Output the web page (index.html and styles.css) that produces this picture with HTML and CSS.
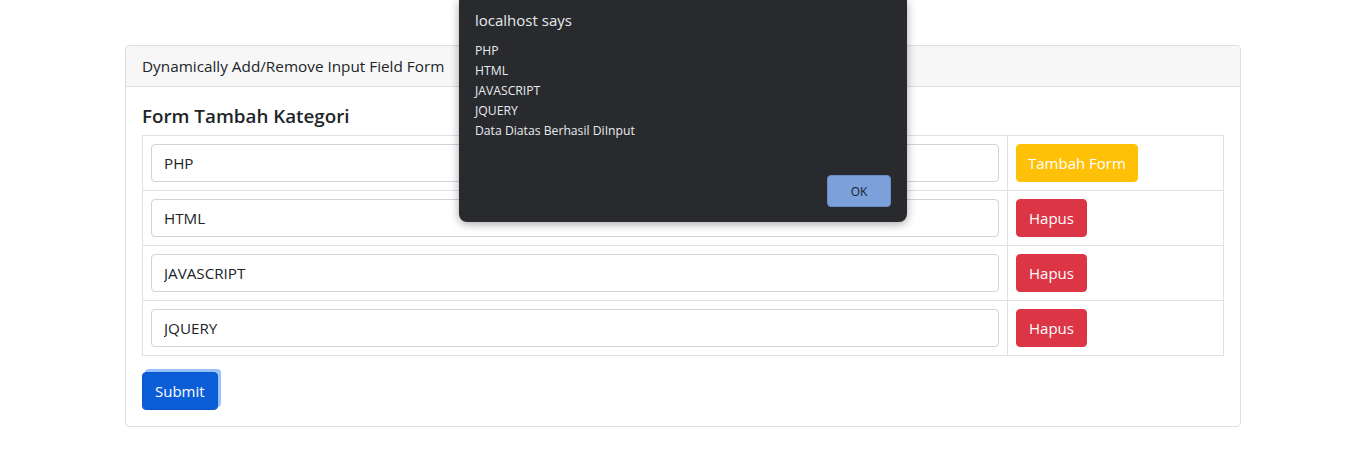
FILE: index.html
```html
<!DOCTYPE html>
<html lang="id">
<head>
<meta charset="utf-8">
<title>Dynamically Add/Remove Input Field Form</title>
<link rel="stylesheet" href="styles.css">
</head>
<body>
<div class="container">
  <div class="card">
    <div class="card-header">Dynamically Add/Remove Input Field Form</div>
    <div class="card-body">
      <h4 class="title">Form Tambah Kategori</h4>
      <table class="tbl">
        <tr>
          <td class="col-input"><input class="field" type="text" value="PHP"></td>
          <td class="col-action"><button class="btn btn-warning" type="button">Tambah Form</button></td>
        </tr>
        <tr>
          <td class="col-input"><input class="field" type="text" value="HTML"></td>
          <td class="col-action"><button class="btn btn-danger" type="button">Hapus</button></td>
        </tr>
        <tr>
          <td class="col-input"><input class="field" type="text" value="JAVASCRIPT"></td>
          <td class="col-action"><button class="btn btn-danger" type="button">Hapus</button></td>
        </tr>
        <tr>
          <td class="col-input"><input class="field" type="text" value="JQUERY"></td>
          <td class="col-action"><button class="btn btn-danger" type="button">Hapus</button></td>
        </tr>
      </table>
      <button class="btn btn-primary" type="button">Submit</button>
    </div>
  </div>
</div>

<div class="dialog">
  <div class="dialog-title">localhost says</div>
  <div class="dialog-msg">
    <div>PHP</div>
    <div>HTML</div>
    <div>JAVASCRIPT</div>
    <div>JQUERY</div>
    <div>Data Diatas Berhasil DiInput</div>
  </div>
  <div class="dialog-actions">
    <button class="dialog-ok" type="button">OK</button>
  </div>
</div>
</body>
</html>
```

FILE: styles.css
```css
* { box-sizing: border-box; }

html, body {
  margin: 0;
  padding: 0;
  background: #fff;
}

body {
  font-family: "Open Sans", "Noto Sans", "Liberation Sans", sans-serif;
  font-size: 16px;
  line-height: 24px;
  color: #212529;
}

.container {
  width: 1140px;
  margin: 45px auto 0;
  padding: 0 12px;
}

.card {
  border: 1px solid #dfdfdf;
  border-radius: 4px;
  background: #fff;
}

.card-header {
  padding: 8px 16px;
  background: #f7f7f7;
  border-bottom: 1px solid #dfdfdf;
  border-radius: 3px 3px 0 0;
  font-size: 15.3px;
  color: #212529;
}

.card-body {
  padding: 16px;
}

.title {
  margin: 0 0 6px;
  font-size: 18.8px;
  line-height: 26px;
  font-weight: 600;
  color: #212529;
}

.tbl {
  width: 100%;
  border-collapse: collapse;
  margin-bottom: 16px;
}

.tbl td {
  border: 1px solid #dee2e6;
  padding: 8px;
  vertical-align: top;
}

.col-action {
  width: 216px;
}

.field {
  display: block;
  width: 100%;
  height: 38px;
  padding: 6px 12px;
  font-family: inherit;
  font-size: 15.2px;
  color: #212529;
  background: #fff;
  border: 1px solid #ced4da;
  border-radius: 4px;
  outline: none;
}

.btn {
  display: inline-block;
  height: 38px;
  padding: 6px 12px;
  font-family: inherit;
  font-size: 15px;
  line-height: 24px;
  color: #fff;
  border: 1px solid transparent;
  border-radius: 4px;
  cursor: pointer;
}

.btn-warning {
  background: #ffc107;
  border-color: #ffc107;
  padding: 6px 11px;
}

.btn-danger {
  background: #dc3545;
  border-color: #dc3545;
}

.btn-primary {
  background: #0b5ed7;
  border-color: #0a58ca;
  box-shadow: 3px -3px 0 0 #98c2fe;
}

.dialog {
  position: absolute;
  left: 459px;
  top: 0;
  width: 448px;
  height: 222px;
  background: #292a2d;
  border-radius: 0 0 8px 8px;
  box-shadow: 0 2px 10px rgba(0, 0, 0, 0.35);
  padding: 9px 16px 15px;
  display: flex;
  flex-direction: column;
  color: #e8eaed;
}

.dialog-title {
  font-size: 15px;
  line-height: 22px;
  margin-bottom: 10px;
}

.dialog-msg {
  font-size: 12.2px;
  line-height: 20px;
  flex: 1;
}

.dialog-actions {
  display: flex;
  justify-content: flex-end;
}

.dialog-ok {
  width: 64px;
  height: 32px;
  background: #7ca0d9;
  border: 1px solid #6a8cc6;
  border-radius: 4px;
  font-family: inherit;
  font-size: 12px;
  color: #1b2333;
  cursor: pointer;
}
```
